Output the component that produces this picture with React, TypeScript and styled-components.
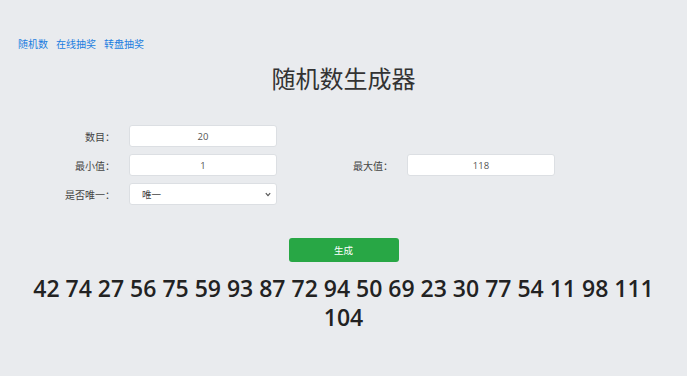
import React, { useState } from 'react';
import styled, { createGlobalStyle } from 'styled-components';

const GlobalStyle = createGlobalStyle`
  html, body {
    margin: 0;
    padding: 0;
    background: #e9ebee;
  }
  body {
    font-family: "Open Sans", "Noto Sans CJK SC", sans-serif;
    color: #333;
  }
`;

const Page = styled.div`
  width: 687px;
  height: 376px;
  box-sizing: border-box;
  padding: 37px 18px 0;
  overflow: hidden;
`;

const Nav = styled.nav`
  display: flex;
  gap: 8px;
  font-size: 10px;
  line-height: 14px;
`;

const NavLink = styled.a`
  color: #1a7de0;
  text-decoration: none;
`;

const Title = styled.h1`
  margin: 12px 0 0;
  text-align: center;
  font-size: 24px;
  font-weight: 400;
  line-height: 32px;
  color: #333;
`;

const Form = styled.div`
  margin-top: 30px;
  display: flex;
  flex-direction: column;
  gap: 7px;
`;

const Row = styled.div`
  display: flex;
  height: 22px;
`;

const Group = styled.div`
  width: 278px;
  display: flex;
  align-items: center;
`;

const Label = styled.label`
  width: 97px;
  padding-right: 14px;
  text-align: right;
  font-size: 10px;
  color: #444;
`;

const Input = styled.input`
  display: block;
  width: 148px;
  height: 22px;
  box-sizing: border-box;
  border: 1px solid #dcdfe3;
  border-radius: 3px;
  background: #fff;
  text-align: center;
  font-family: inherit;
  font-size: 9.5px;
  color: #555;
  outline: none;
`;

const SelectWrap = styled.div`
  position: relative;
  width: 148px;
  height: 22px;
`;

const Select = styled.select`
  display: block;
  width: 100%;
  height: 100%;
  box-sizing: border-box;
  border: 1px solid #dcdfe3;
  border-radius: 3px;
  background: #fff;
  padding: 0 12px;
  appearance: none;
  font-family: inherit;
  font-size: 9.5px;
  color: #444;
  outline: none;
`;

const Chevron = styled.svg`
  position: absolute;
  right: 6px;
  top: 9px;
  width: 6px;
  height: 5px;
  pointer-events: none;
`;

const Actions = styled.div`
  margin-top: 33px;
  display: flex;
  justify-content: center;
`;

const Button = styled.button`
  width: 110px;
  height: 24px;
  border: none;
  border-radius: 3px;
  background: #28a745;
  color: #fff;
  font-family: inherit;
  font-size: 9.5px;
  cursor: pointer;
`;

const Result = styled.div`
  margin-top: 12px;
  text-align: center;
  font-size: 23px;
  font-weight: 600;
  line-height: 29px;
  color: #222;
  padding: 0 10px;
`;

const initial = [42, 74, 27, 56, 75, 59, 93, 87, 72, 94, 50, 69, 23, 30, 77, 54, 11, 98, 111, 104];

export default function App() {
  const [count, setCount] = useState('20');
  const [min, setMin] = useState('1');
  const [max, setMax] = useState('118');
  const [unique, setUnique] = useState('1');
  const [numbers, setNumbers] = useState<number[]>(initial);

  const generate = () => {
    const n = parseInt(count, 10) || 0;
    const lo = parseInt(min, 10) || 0;
    const hi = parseInt(max, 10) || 0;
    const out: number[] = [];
    const pool = new Set<number>();
    let guard = 0;
    while (out.length < n && guard < 100000) {
      guard++;
      const v = lo + Math.floor(Math.random() * (hi - lo + 1));
      if (unique === '1') {
        if (pool.has(v)) continue;
        pool.add(v);
      }
      out.push(v);
    }
    setNumbers(out);
  };

  return (
    <>
      <GlobalStyle />
      <Page>
        <Nav>
          <NavLink href="#">随机数</NavLink>
          <NavLink href="#">在线抽奖</NavLink>
          <NavLink href="#">转盘抽奖</NavLink>
        </Nav>
        <Title>随机数生成器</Title>
        <Form>
          <Row>
            <Group>
              <Label>数目：</Label>
              <Input value={count} onChange={(e) => setCount(e.target.value)} />
            </Group>
          </Row>
          <Row>
            <Group>
              <Label>最小值：</Label>
              <Input value={min} onChange={(e) => setMin(e.target.value)} />
            </Group>
            <Group>
              <Label>最大值：</Label>
              <Input value={max} onChange={(e) => setMax(e.target.value)} />
            </Group>
          </Row>
          <Row>
            <Group>
              <Label>是否唯一：</Label>
              <SelectWrap>
                <Select value={unique} onChange={(e) => setUnique(e.target.value)}>
                  <option value="1">唯一</option>
                  <option value="0">不唯一</option>
                </Select>
                <Chevron viewBox="0 0 6 5">
                  <path d="M0.8 1.2 L3 3.6 L5.2 1.2" fill="none" stroke="#555" strokeWidth="1.2" />
                </Chevron>
              </SelectWrap>
            </Group>
          </Row>
        </Form>
        <Actions>
          <Button onClick={generate}>生成</Button>
        </Actions>
        <Result>{numbers.join(' ')}</Result>
      </Page>
    </>
  );
}
